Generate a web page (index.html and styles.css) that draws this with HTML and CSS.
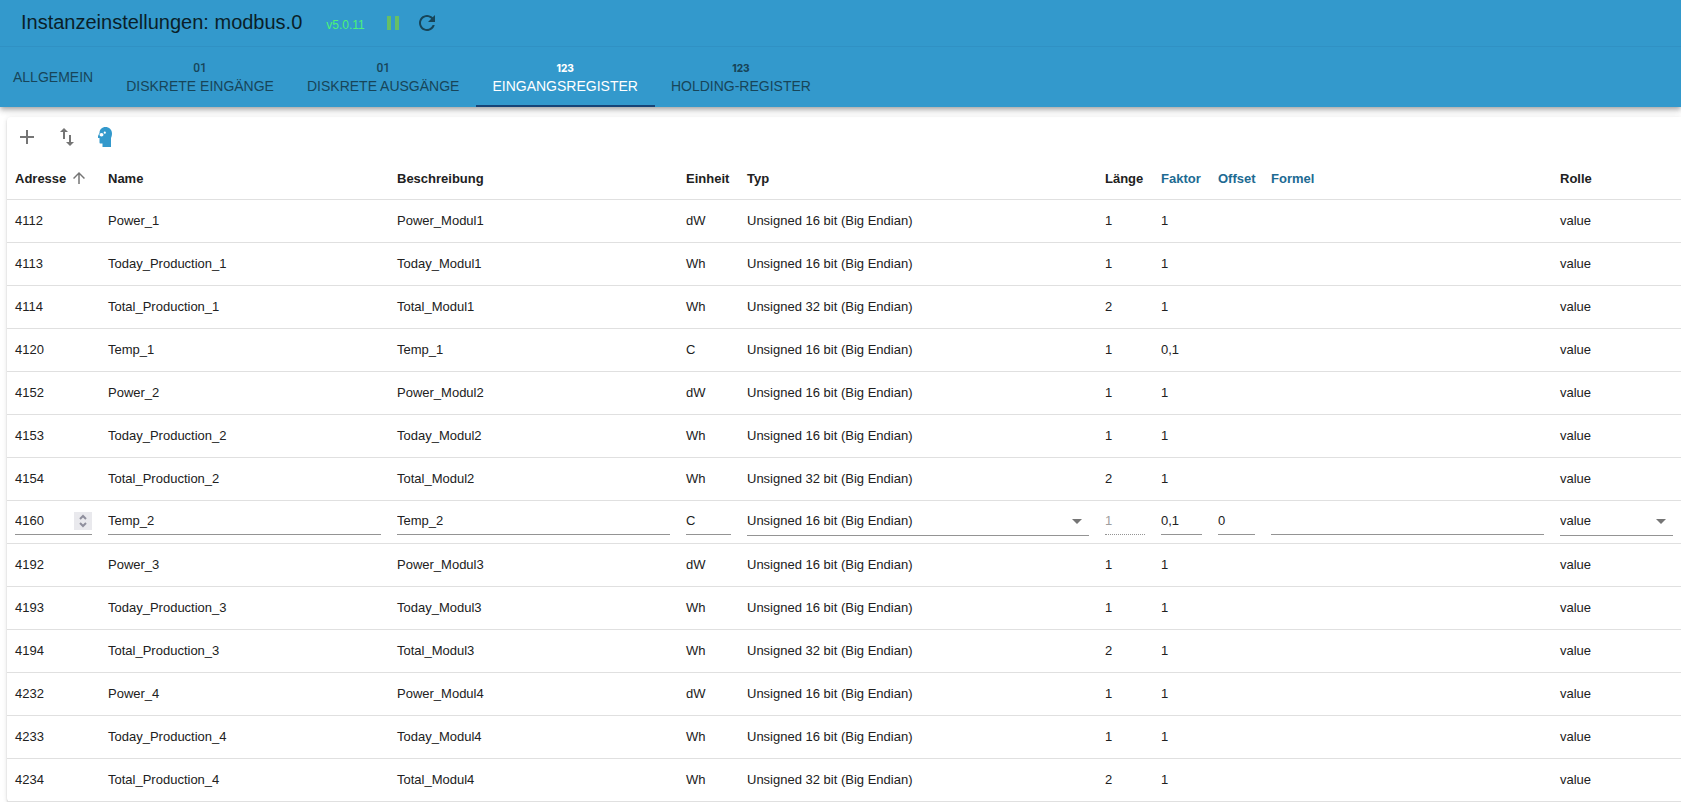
FILE: index.html
```html
<!DOCTYPE html>
<html lang="de">
<head>
  <meta charset="UTF-8">
  <title>Instanzeinstellungen: modbus.0</title>
  <link rel="stylesheet" href="styles.css">
</head>
<body>
  <header class="app-bar">
    <div class="toolbar">
      <h1>Instanzeinstellungen: modbus.0</h1>
      <span class="version">v5.0.11</span>
      <button class="bar-button pause" aria-label="Pause">
        <svg viewBox="0 0 24 24"><path d="M6 19h4V5H6v14zm8-14v14h4V5h-4z"/></svg>
      </button>
      <button class="bar-button" aria-label="Neu starten">
        <svg viewBox="0 0 24 24"><path d="M17.65 6.35C16.2 4.9 14.21 4 12 4c-4.42 0-7.99 3.58-7.99 8s3.57 8 7.99 8c3.73 0 6.84-2.55 7.73-6h-2.08c-.82 2.33-3.04 4-5.65 4-3.31 0-6-2.69-6-6s2.69-6 6-6c1.66 0 3.14.69 4.22 1.78L13 11h7V4l-2.35 2.35z"/></svg>
      </button>
    </div>
    <nav class="tabs">
      <button class="tab first">Allgemein</button>
      <button class="tab"><span class="digits">01</span>Diskrete Eingänge</button>
      <button class="tab"><span class="digits">01</span>Diskrete Ausgänge</button>
      <button class="tab active"><span class="digits heavy">123</span>Eingangsregister</button>
      <button class="tab"><span class="digits heavy">123</span>Holding-Register</button>
    </nav>
  </header>

  <main class="card">
    <div class="actions">
      <button aria-label="Hinzufügen">
        <svg viewBox="0 0 24 24"><path d="M19 13h-6v6h-2v-6H5v-2h6V5h2v6h6v2z"/></svg>
      </button>
      <button aria-label="Importieren und exportieren">
        <svg viewBox="0 0 24 24"><path d="M16 17.01V10h-2v7.01h-3L15 21l4-3.99h-3zM9 3L5 6.99h3V14h2V6.99h3L9 3z"/></svg>
      </button>
      <button class="expert" aria-label="Expertenmodus">
        <svg viewBox="0 0 24 24"><path fill-rule="evenodd" d="M10.500 2C14 2 17 4.500 17 8.500c0 2-.6 3.500-1 4.500v9H7.500v-3.500h-2c-.7 0-1-.5-1-1V13H3v-2l1.500-3C4.500 4.500 7 2 10.500 2zM4.500 9.700a2 1.700 0 1 0 4 0 2 1.700 0 1 0-4 0zM8.700 7.700a1.100 1.100 0 1 0 2.200 0 1.100 1.100 0 1 0-2.200 0z"/></svg>
      </button>
    </div>

    <table>
      <colgroup>
        <col class="col-address"><col><col><col class="col-unit"><col class="col-type">
        <col class="col-len"><col class="col-factor"><col class="col-offset"><col><col class="col-role">
      </colgroup>
      <thead>
        <tr>
          <th><span class="sort">Adresse <svg viewBox="0 0 24 24"><path d="M4 12l1.410 1.410L11 7.830V20h2V7.830l5.580 5.590L20 12l-8-8-8 8z"/></svg></span></th>
          <th>Name</th>
          <th>Beschreibung</th>
          <th>Einheit</th>
          <th>Typ</th>
          <th>Länge</th>
          <th class="link">Faktor</th>
          <th class="link">Offset</th>
          <th class="link">Formel</th>
          <th>Rolle</th>
        </tr>
      </thead>
      <tbody>
        <tr><td>4112</td><td>Power_1</td><td>Power_Modul1</td><td>dW</td><td>Unsigned 16 bit (Big Endian)</td><td>1</td><td>1</td><td></td><td></td><td>value</td></tr>
        <tr><td>4113</td><td>Today_Production_1</td><td>Today_Modul1</td><td>Wh</td><td>Unsigned 16 bit (Big Endian)</td><td>1</td><td>1</td><td></td><td></td><td>value</td></tr>
        <tr><td>4114</td><td>Total_Production_1</td><td>Total_Modul1</td><td>Wh</td><td>Unsigned 32 bit (Big Endian)</td><td>2</td><td>1</td><td></td><td></td><td>value</td></tr>
        <tr><td>4120</td><td>Temp_1</td><td>Temp_1</td><td>C</td><td>Unsigned 16 bit (Big Endian)</td><td>1</td><td>0,1</td><td></td><td></td><td>value</td></tr>
        <tr><td>4152</td><td>Power_2</td><td>Power_Modul2</td><td>dW</td><td>Unsigned 16 bit (Big Endian)</td><td>1</td><td>1</td><td></td><td></td><td>value</td></tr>
        <tr><td>4153</td><td>Today_Production_2</td><td>Today_Modul2</td><td>Wh</td><td>Unsigned 16 bit (Big Endian)</td><td>1</td><td>1</td><td></td><td></td><td>value</td></tr>
        <tr><td>4154</td><td>Total_Production_2</td><td>Total_Modul2</td><td>Wh</td><td>Unsigned 32 bit (Big Endian)</td><td>2</td><td>1</td><td></td><td></td><td>value</td></tr>
        <tr class="edit">
          <td>
            <div class="field number">
              <input type="text" inputmode="numeric" value="4160" aria-label="Adresse">
              <svg class="spin" viewBox="0 0 18 18"><path d="M6 7l3-3 3 3M6 11l3 3 3-3"/></svg>
            </div>
          </td>
          <td><div class="field"><input type="text" value="Temp_2" aria-label="Name"></div></td>
          <td><div class="field"><input type="text" value="Temp_2" aria-label="Beschreibung"></div></td>
          <td><div class="field"><input type="text" value="C" aria-label="Einheit"></div></td>
          <td>
            <div class="field choice">
              <select aria-label="Typ"><option>Unsigned 16 bit (Big Endian)</option><option>Unsigned 32 bit (Big Endian)</option></select>
              <svg class="arrow" viewBox="0 0 24 24"><path d="M7 10l5 5 5-5z"/></svg>
            </div>
          </td>
          <td><div class="field off"><input type="text" value="1" aria-label="Länge" disabled></div></td>
          <td><div class="field"><input type="text" value="0,1" aria-label="Faktor"></div></td>
          <td><div class="field"><input type="text" value="0" aria-label="Offset"></div></td>
          <td><div class="field"><input type="text" value="" aria-label="Formel"></div></td>
          <td>
            <div class="field choice">
              <select aria-label="Rolle"><option>value</option></select>
              <svg class="arrow" viewBox="0 0 24 24"><path d="M7 10l5 5 5-5z"/></svg>
            </div>
          </td>
        </tr>
        <tr><td>4192</td><td>Power_3</td><td>Power_Modul3</td><td>dW</td><td>Unsigned 16 bit (Big Endian)</td><td>1</td><td>1</td><td></td><td></td><td>value</td></tr>
        <tr><td>4193</td><td>Today_Production_3</td><td>Today_Modul3</td><td>Wh</td><td>Unsigned 16 bit (Big Endian)</td><td>1</td><td>1</td><td></td><td></td><td>value</td></tr>
        <tr><td>4194</td><td>Total_Production_3</td><td>Total_Modul3</td><td>Wh</td><td>Unsigned 32 bit (Big Endian)</td><td>2</td><td>1</td><td></td><td></td><td>value</td></tr>
        <tr><td>4232</td><td>Power_4</td><td>Power_Modul4</td><td>dW</td><td>Unsigned 16 bit (Big Endian)</td><td>1</td><td>1</td><td></td><td></td><td>value</td></tr>
        <tr><td>4233</td><td>Today_Production_4</td><td>Today_Modul4</td><td>Wh</td><td>Unsigned 16 bit (Big Endian)</td><td>1</td><td>1</td><td></td><td></td><td>value</td></tr>
        <tr><td>4234</td><td>Total_Production_4</td><td>Total_Modul4</td><td>Wh</td><td>Unsigned 32 bit (Big Endian)</td><td>2</td><td>1</td><td></td><td></td><td>value</td></tr>
      </tbody>
    </table>
  </main>
</body>
</html>
```
FILE: styles.css
```css
* {
  box-sizing: border-box;
}
body {
  margin: 0;
  background: #fff;
  color: #212121;
  font-family: "Liberation Sans", Arial, sans-serif;
  font-size: 13px;
}
button {
  border: none;
  background: none;
  padding: 0;
  font-family: inherit;
  cursor: pointer;
}
svg {
  display: block;
  fill: currentColor;
}

/* header */
.app-bar {
  position: relative;
  background: #3399cc;
  box-shadow: 0 2px 4px -1px rgba(0,0,0,0.2), 0 4px 5px rgba(0,0,0,0.14), 0 1px 10px rgba(0,0,0,0.12);
}
.toolbar {
  display: flex;
  align-items: center;
  height: 47px;
  padding: 0 0 1px 21px;
  border-bottom: 1px solid #3091c4;
}
h1 {
  margin: 0;
  font-size: 20px;
  font-weight: normal;
  color: #0a1f29;
}
.version {
  margin: 4px 16px 0 24px;
  font-size: 12px;
  color: #4cf278;
}
.bar-button {
  margin-right: 10px;
  color: #174559;
}
.bar-button svg {
  width: 24px;
  height: 24px;
}
.pause {
  color: #66bf66;
}
.tabs {
  display: flex;
  height: 60px;
}
.tab {
  display: flex;
  flex-direction: column;
  align-items: center;
  justify-content: center;
  padding: 2px 17px 0 16px;
  border-bottom: 2px solid transparent;
  font-size: 14px;
  line-height: 18px;
  text-transform: uppercase;
  color: #174559;
}
.tab.first {
  padding-left: 13px;
}
.tab.active {
  color: #fff;
  border-color: #164477;
}
.digits {
  font-family: Roboto, sans-serif;
  font-size: 12px;
  font-weight: 500;
}
.heavy {
  font-family: Inter, sans-serif;
  font-size: 10px;
  font-weight: 800;
}

/* register table */
.card {
  margin: 10px 0 0 7px;
  border-radius: 4px 0 0 4px;
  background: #fff;
  box-shadow: 0 2px 1px -1px rgba(0,0,0,0.25), 0 2px 2px rgba(0,0,0,0.14), 0 1px 5px rgba(0,0,0,0.12);
}
.actions {
  display: flex;
  gap: 16px;
  height: 40px;
  padding: 0 8px;
  align-items: center;
  color: #757575;
}
.actions button {
  color: inherit;
}
.actions svg {
  width: 24px;
  height: 24px;
}
.actions .expert {
  color: #3399cc;
}
table {
  width: 100%;
  table-layout: fixed;
  border-collapse: separate;
  border-spacing: 0;
}
.col-address { width: 93px; }
.col-unit { width: 61px; }
.col-type { width: 358px; }
.col-len { width: 56px; }
.col-factor { width: 57px; }
.col-offset { width: 53px; }
.col-role { width: 129px; }
th, td {
  height: 43px;
  padding: 0 8px;
  border-bottom: 1px solid #e0e0e0;
  text-align: left;
  white-space: nowrap;
}
td {
  padding-bottom: 2px;
}
.sort {
  display: flex;
  align-items: center;
  gap: 4px;
}
.sort svg {
  width: 18px;
  height: 18px;
  color: #757575;
}
.link {
  color: #206a92;
}

/* row being edited */
.field {
  position: relative;
  display: flex;
  align-items: center;
  height: 27px;
  border-bottom: 1px solid #949494;
}
.field input,
.field select {
  width: 100%;
  min-width: 0;
  padding: 0;
  border: none;
  background: none;
  font: inherit;
  color: inherit;
  appearance: none;
  outline: none;
}
.choice {
  height: 30px;
}
.arrow {
  position: absolute;
  right: 0;
  width: 24px;
  height: 24px;
  color: #757575;
  pointer-events: none;
}
.off {
  border-bottom: 1px dotted #949494;
  color: #9e9e9e;
}
.spin {
  flex: none;
  width: 18px;
  height: 18px;
  background: #e9e9ed;
  fill: none;
  stroke: #8f8f9d;
  stroke-width: 2;
}
```
